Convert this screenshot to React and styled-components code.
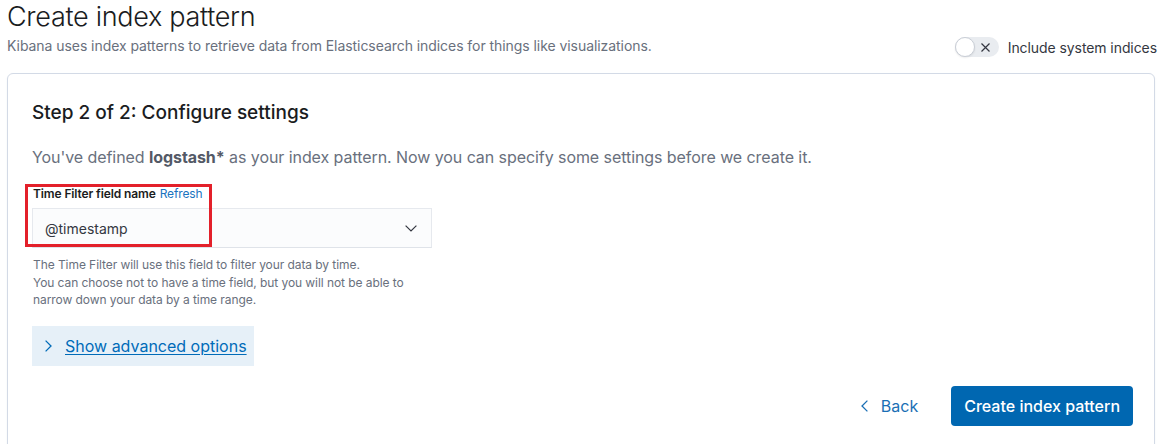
import React from "react";
import styled, { createGlobalStyle } from "styled-components";

const Global = createGlobalStyle`
  html, body { margin: 0; padding: 0; background: #ffffff; }
  body { font-family: Inter, "Noto Sans", sans-serif; color: #343741; -webkit-font-smoothing: antialiased; }
  * { box-sizing: border-box; }
`;

const Page = styled.div`
  padding: 0 5px 0 7px;
`;

const Header = styled.header`
  display: flex;
  justify-content: space-between;
  align-items: flex-end;
  margin-right: -2px;
`;

const TitleBlock = styled.div`
  display: flex;
  flex-direction: column;
`;

const Title = styled.h1`
  margin: 0;
  font-size: 27px;
  line-height: 34px;
  font-weight: 300;
  color: #1a1c21;
  letter-spacing: -0.3px;
`;

const Subtitle = styled.p`
  margin: 2px 0 0;
  font-size: 14px;
  line-height: 20px;
  color: #69707d;
  letter-spacing: -0.06px;
`;

const ToggleRow = styled.label`
  display: flex;
  align-items: center;
  gap: 9px;
  height: 20px;
  margin-bottom: -1px;
  font-size: 14px;
  color: #343741;
  letter-spacing: -0.08px;
`;

const Track = styled.span`
  position: relative;
  display: inline-flex;
  align-items: center;
  width: 44px;
  height: 20px;
  border-radius: 10px;
  background: #e9ecf0;
`;

const Knob = styled.span`
  position: absolute;
  left: 0;
  top: 0;
  width: 20px;
  height: 20px;
  border-radius: 50%;
  background: #ffffff;
  border: 1px solid #c9ced6;
  box-shadow: 0 1px 2px rgba(0, 0, 0, 0.08);
`;

const CrossIcon = styled.svg`
  position: absolute;
  left: 26px;
  top: 6px;
`;

const Panel = styled.section`
  margin-top: 17px;
  border: 1px solid #d3dae6;
  border-radius: 6px;
  background: #ffffff;
  box-shadow: 0 1px 2px rgba(152, 162, 179, 0.12);
  padding: 25px 22px 24px 24px;
`;

const StepTitle = styled.h2`
  margin: 0;
  font-size: 19px;
  line-height: 28px;
  font-weight: 500;
  color: #1a1c21;
`;

const Description = styled.p`
  margin: 18px 0 0;
  font-size: 16px;
  line-height: 24px;
  color: #69707d;
  letter-spacing: -0.07px;

  strong {
    font-weight: 700;
    color: #535966;
  }
`;

const FormRow = styled.div`
  position: relative;
  margin-top: 16px;
  width: 400px;
`;

const Highlight = styled.div`
  position: absolute;
  left: -7px;
  top: -1px;
  width: 187px;
  height: 63px;
  border: 3px solid #e3202a;
  pointer-events: none;
`;

const LabelRow = styled.div`
  display: flex;
  align-items: baseline;
  gap: 4px;
  font-size: 12px;
  line-height: 18px;
  margin-bottom: 5px;
  padding-left: 1px;
  letter-spacing: -0.12px;
`;

const Label = styled.span`
  font-weight: 600;
  color: #1a1c21;
`;

const LinkText = styled.span`
  color: #1a73c0;
  font-weight: 400;
`;

const Select = styled.div`
  display: flex;
  align-items: center;
  justify-content: space-between;
  height: 40px;
  padding: 0 14px 0 12px;
  background: #fbfcfd;
  border: 1px solid #e6e9ee;
  border-bottom-color: #dfe3e9;
  font-size: 14px;
  color: #343741;
`;

const HelpText = styled.p`
  margin: 8px 0 0;
  font-size: 12px;
  line-height: 17.5px;
  color: #69707d;
  padding-left: 1px;
  letter-spacing: -0.07px;
`;

const AdvancedButton = styled.button`
  display: flex;
  align-items: center;
  gap: 13px;
  margin-top: 17px;
  height: 40px;
  width: 222px;
  padding: 0 0 0 13px;
  border: none;
  background: #e6f0f8;
  font-family: inherit;
  font-size: 16px;
  color: #006bb8;
  cursor: pointer;

  span {
    text-decoration: underline;
    text-underline-offset: 2px;
  }
`;

const Actions = styled.div`
  display: flex;
  justify-content: flex-end;
  align-items: center;
  gap: 25px;
  margin-top: 20px;
  margin-right: -1px;
`;

const EmptyButton = styled.button`
  display: flex;
  align-items: center;
  gap: 13px;
  height: 40px;
  padding: 0 8px;
  border: none;
  background: transparent;
  font-family: inherit;
  font-size: 16px;
  color: #1a6fb5;
  cursor: pointer;
`;

const PrimaryButton = styled.button`
  height: 40px;
  padding: 0 13px;
  border: none;
  border-radius: 4px;
  background: #0067b1;
  color: #ffffff;
  font-family: inherit;
  font-size: 16px;
  font-weight: 500;
  cursor: pointer;
`;

const Chevron = ({ dir, color = "#343741", w = 12, h = 7 }) => {
  if (dir === "down")
    return (
      <svg width={w} height={h} viewBox="0 0 12 7" fill="none">
        <path d="M0.6 0.6 L6 6 L11.4 0.6" stroke={color} strokeWidth="1.2" />
      </svg>
    );
  if (dir === "right")
    return (
      <svg width="7" height="12" viewBox="0 0 7 12" fill="none">
        <path d="M0.6 0.6 L6 6 L0.6 11.4" stroke={color} strokeWidth="1.3" />
      </svg>
    );
  return (
    <svg width="7" height="12" viewBox="0 0 7 12" fill="none">
      <path d="M6.4 0.6 L1 6 L6.4 11.4" stroke={color} strokeWidth="1.3" />
    </svg>
  );
};

export default function App() {
  return (
    <>
      <Global />
      <Page>
        <Header>
          <TitleBlock>
            <Title>Create index pattern</Title>
            <Subtitle>
              Kibana uses index patterns to retrieve data from Elasticsearch indices for things like visualizations.
            </Subtitle>
          </TitleBlock>
          <ToggleRow>
            <Track>
              <Knob />
              <CrossIcon width="9" height="9" viewBox="0 0 9 9">
                <path d="M0.5 0.5 L8.5 8.5 M8.5 0.5 L0.5 8.5" stroke="#343741" strokeWidth="1.2" />
              </CrossIcon>
            </Track>
            Include system indices
          </ToggleRow>
        </Header>

        <Panel>
          <StepTitle>Step 2 of 2: Configure settings</StepTitle>
          <Description>
            You've defined <strong>logstash*</strong> as your index pattern. Now you can specify some settings before we create it.
          </Description>

          <FormRow>
            <Highlight />
            <LabelRow>
              <Label>Time Filter field name</Label>
              <LinkText>Refresh</LinkText>
            </LabelRow>
            <Select>
              @timestamp
              <Chevron dir="down" />
            </Select>
            <HelpText>
              The Time Filter will use this field to filter your data by time.
              <br />
              You can choose not to have a time field, but you will not be able to
              <br />
              narrow down your data by a time range.
            </HelpText>
          </FormRow>

          <AdvancedButton>
            <Chevron dir="right" color="#006bb8" />
            <span>Show advanced options</span>
          </AdvancedButton>

          <Actions>
            <EmptyButton>
              <Chevron dir="left" color="#1a6fb5" />
              Back
            </EmptyButton>
            <PrimaryButton>Create index pattern</PrimaryButton>
          </Actions>
        </Panel>
      </Page>
    </>
  );
}
